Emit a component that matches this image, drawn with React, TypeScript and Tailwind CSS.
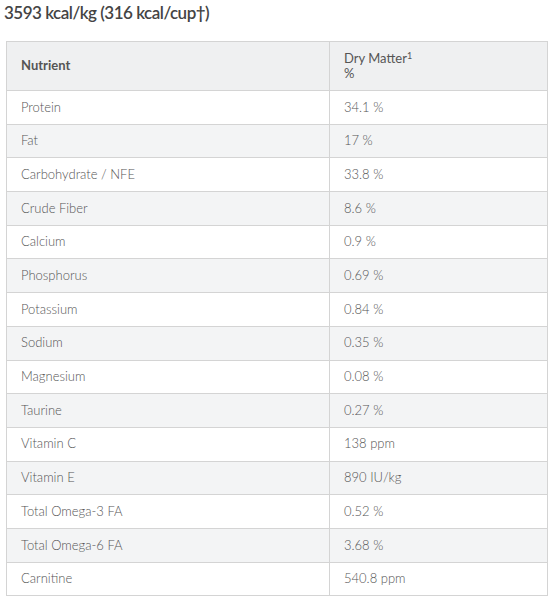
const rows: [string, string][] = [
  ['Protein', '34.1 %'],
  ['Fat', '17 %'],
  ['Carbohydrate / NFE', '33.8 %'],
  ['Crude Fiber', '8.6 %'],
  ['Calcium', '0.9 %'],
  ['Phosphorus', '0.69 %'],
  ['Potassium', '0.84 %'],
  ['Sodium', '0.35 %'],
  ['Magnesium', '0.08 %'],
  ['Taurine', '0.27 %'],
  ['Vitamin C', '138 ppm'],
  ['Vitamin E', '890 IU/kg'],
  ['Total Omega-3 FA', '0.52 %'],
  ['Total Omega-6 FA', '3.68 %'],
  ['Carnitine', '540.8 ppm'],
];

export default function App() {
  return (
    <div className="w-[555px] h-[600px] overflow-hidden bg-white font-['Lato',sans-serif] text-[#555]">
      <h2 className="pl-[4px] pt-[2px] text-[17px] leading-[22px] font-semibold text-[#444] tracking-[-0.5px]">
        3593 kcal/kg (316 kcal/cup†)
      </h2>

      <table className="ml-[6px] mt-[17px] w-[542px] border-collapse text-[13px]">
        <thead>
          <tr className="bg-[#eff0f1] h-[49px]">
            <th className="w-[323px] border border-[#d4d4d4] pl-[14px] text-left font-bold">Nutrient</th>
            <th className="border border-[#d4d4d4] pl-[14px] text-left font-normal leading-[15px]">
              Dry Matter<sup className="text-[9px]">1</sup>
              <br />%
            </th>
          </tr>
        </thead>
        <tbody>
          {rows.map(([name, value], i) => (
            <tr key={name} className={i % 2 === 1 ? 'bg-[#f3f4f5] h-[33.7px]' : 'bg-white h-[33.7px]'}>
              <td className="border border-[#d4d4d4] pl-[14px] font-light">{name}</td>
              <td className="border border-[#d4d4d4] pl-[14px] font-light">{value}</td>
            </tr>
          ))}
        </tbody>
      </table>
    </div>
  );
}
